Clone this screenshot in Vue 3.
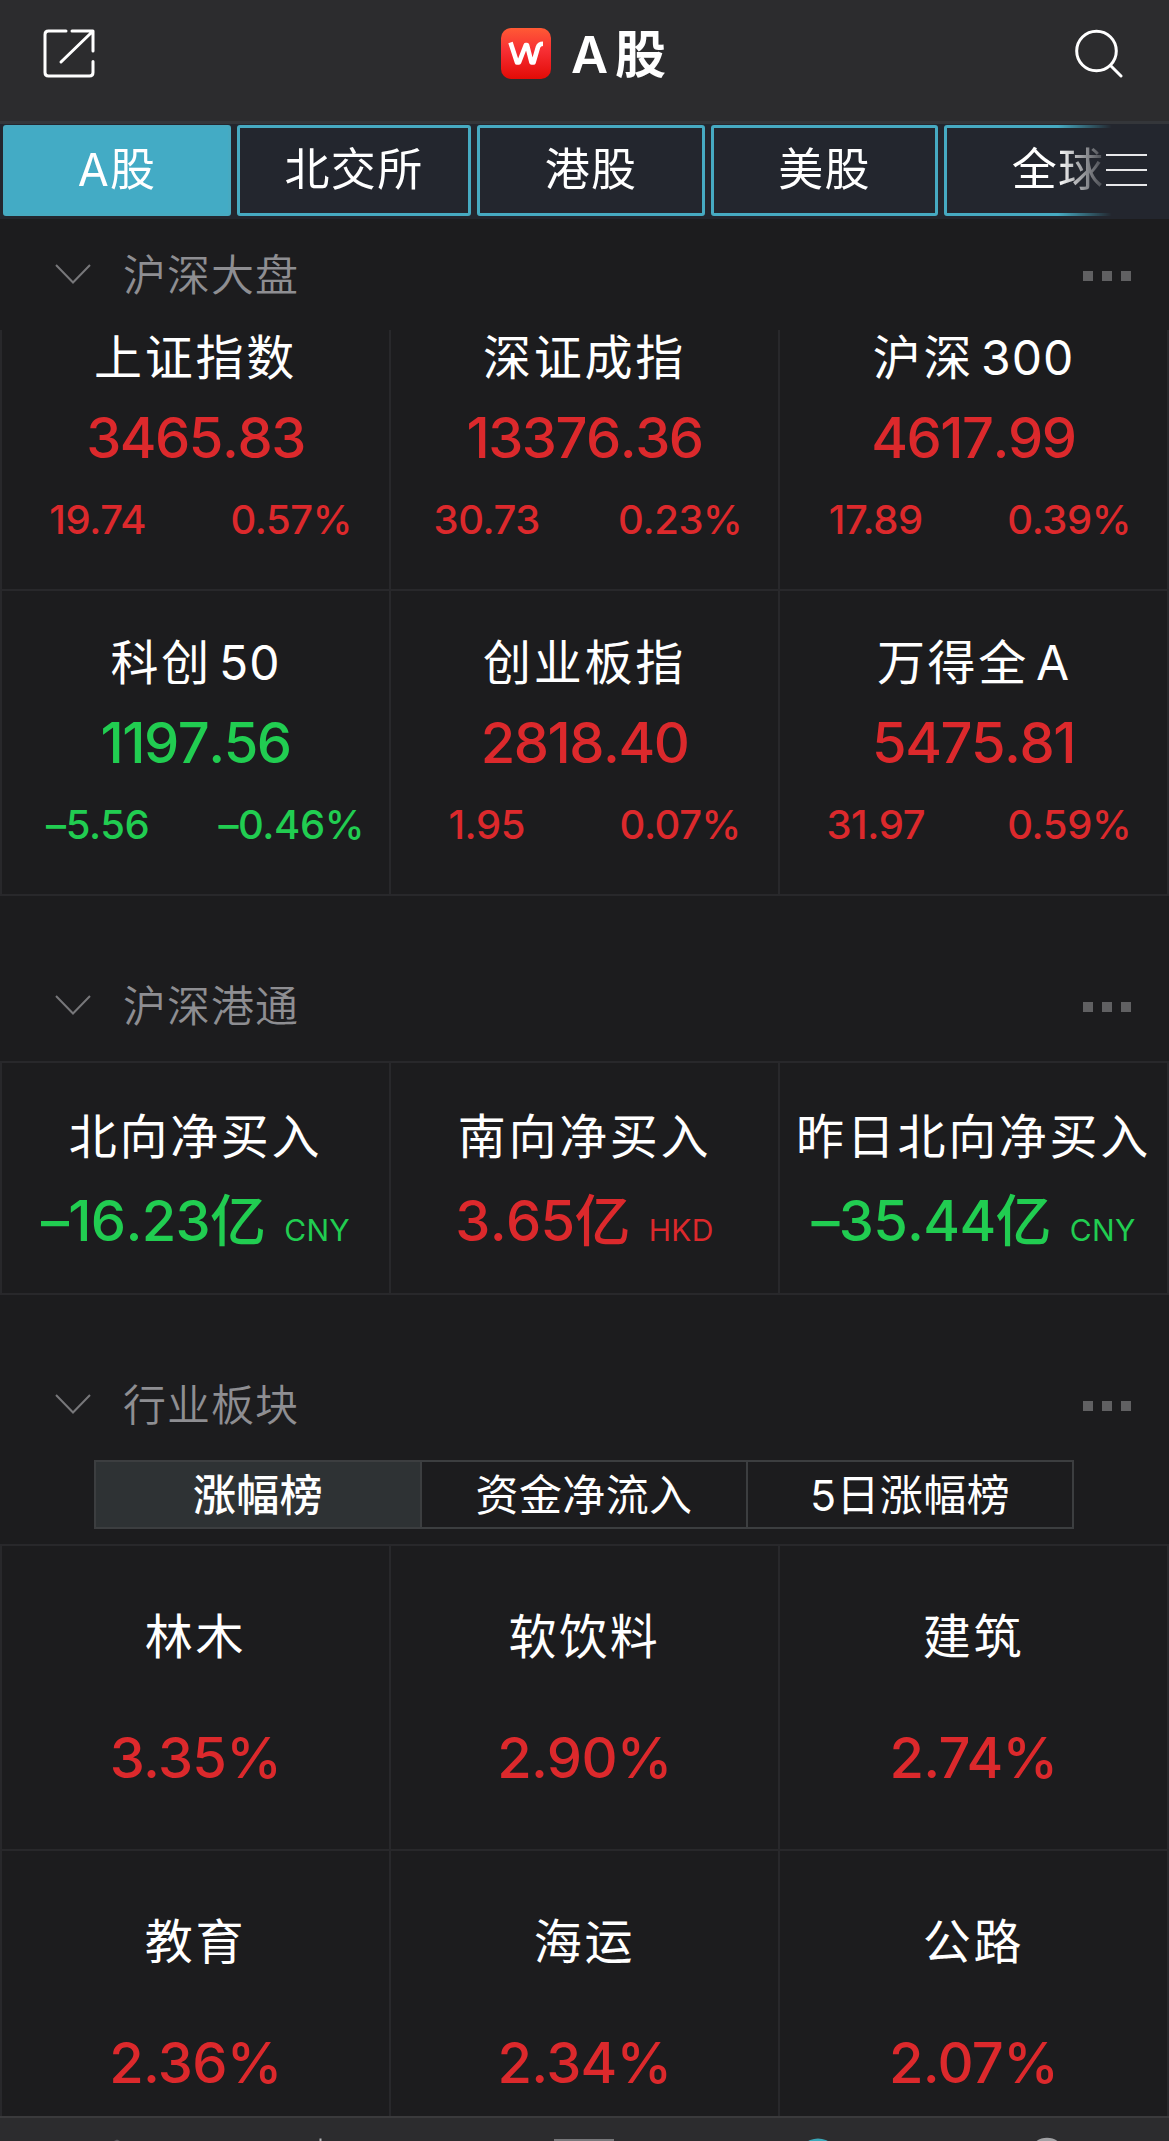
<script setup>
const tabs = [
  { name: 'A股', width: 228, active: true },
  { name: '北交所', width: 234 },
  { name: '港股', width: 228 },
  { name: '美股', width: 227 },
  { name: '全球', width: 228 },
]

const indices = [
  { name: '上证指数', value: '3465.83', change: '19.74', percent: '0.57%', up: true },
  { name: '深证成指', value: '13376.36', change: '30.73', percent: '0.23%', up: true },
  { name: '沪深', suffix: '300', value: '4617.99', change: '17.89', percent: '0.39%', up: true },
  { name: '科创', suffix: '50', value: '1197.56', change: '–5.56', percent: '–0.46%', up: false },
  { name: '创业板指', value: '2818.40', change: '1.95', percent: '0.07%', up: true },
  { name: '万得全', suffix: 'A', value: '5475.81', change: '31.97', percent: '0.59%', up: true },
]

const flows = [
  { name: '北向净买入', amount: '–16.23', currency: 'CNY', up: false },
  { name: '南向净买入', amount: '3.65', currency: 'HKD', up: true },
  { name: '昨日北向净买入', amount: '–35.44', currency: 'CNY', up: false },
]

const rankings = ['涨幅榜', '资金净流入', '5日涨幅榜']

const sectors = [
  { name: '林木', percent: '3.35%' },
  { name: '软饮料', percent: '2.90%' },
  { name: '建筑', percent: '2.74%' },
  { name: '教育', percent: '2.36%' },
  { name: '海运', percent: '2.34%' },
  { name: '公路', percent: '2.07%' },
]
</script>

<template>
  <div class="page">
    <header class="topbar">
      <svg class="share" width="52" height="50" viewBox="0 0 52 50" fill="none" stroke="#fff" stroke-width="3" stroke-linecap="round" stroke-linejoin="round">
        <path d="M23 2H5.500Q2 2 2 5.500V43.500Q2 47 5.500 47H46.500Q50 47 50 43.500V32.500" />
        <path d="M29 2H50V22M49 3L18 33" />
      </svg>
      <div class="brand">
        <svg class="logo" width="50" height="51" viewBox="0 0 50 51">
          <defs>
            <linearGradient id="logoFill" x1="0" y1="0" x2="0" y2="1">
              <stop offset="0" stop-color="#ff5a35" />
              <stop offset=".45" stop-color="#f72e33" />
              <stop offset="1" stop-color="#e20b06" />
            </linearGradient>
          </defs>
          <rect width="50" height="51" rx="10" fill="url(#logoFill)" />
          <path d="M9.500 14.500L16 34.500H18L24.800 17H26L30.500 34.500H32.500L37 19Q38 15.800 42 15.800" fill="none" stroke="#fff" stroke-width="4.600" stroke-linejoin="round" />
        </svg>
        <h1 class="title">A<span>股</span></h1>
      </div>
      <svg class="search" width="48" height="50" viewBox="0 0 48 50" fill="none" stroke="#fff" stroke-width="3" stroke-linecap="round">
        <circle cx="21.500" cy="22" r="19.800" />
        <path d="M35.500 36.500L46 47" />
      </svg>
    </header>

    <nav class="tabs">
      <div class="tab-strip">
        <div v-for="tab in tabs" :key="tab.name" class="tab" :class="{ active: tab.active }" :style="{ width: tab.width + 'px' }">{{ tab.name }}</div>
      </div>
      <div class="menu"><i></i><i></i><i></i></div>
    </nav>

    <section>
      <div class="section-head">
        <svg class="chevron" width="36" height="21" viewBox="0 0 36 21"><path d="M1 1L18 18.500L35 1" /></svg>
        <h2>沪深大盘</h2>
        <div class="dots"><i></i><i></i><i></i></div>
      </div>
      <div class="grid">
        <article v-for="item in indices" :key="item.name" class="cell index" :class="item.up ? 'up' : 'down'">
          <div class="name">{{ item.name }}<span v-if="item.suffix" class="suffix">{{ item.suffix }}</span></div>
          <div class="value">{{ item.value }}</div>
          <div class="detail"><span>{{ item.change }}</span><span>{{ item.percent }}</span></div>
        </article>
      </div>
    </section>

    <section class="spaced">
      <div class="section-head">
        <svg class="chevron" width="36" height="21" viewBox="0 0 36 21"><path d="M1 1L18 18.500L35 1" /></svg>
        <h2>沪深港通</h2>
        <div class="dots"><i></i><i></i><i></i></div>
      </div>
      <div class="grid lined">
        <article v-for="item in flows" :key="item.name" class="cell flow" :class="item.up ? 'up' : 'down'">
          <div class="name">{{ item.name }}</div>
          <div class="value">{{ item.amount }}<span class="unit">亿</span><span class="currency">{{ item.currency }}</span></div>
        </article>
      </div>
    </section>

    <section class="spaced">
      <div class="section-head">
        <svg class="chevron" width="36" height="21" viewBox="0 0 36 21"><path d="M1 1L18 18.500L35 1" /></svg>
        <h2>行业板块</h2>
        <div class="dots"><i></i><i></i><i></i></div>
      </div>
      <div class="segments">
        <div v-for="(name, i) in rankings" :key="name" class="segment" :class="{ active: i === 0 }">{{ name }}</div>
      </div>
      <div class="grid lined">
        <article v-for="item in sectors" :key="item.name" class="cell sector up">
          <div class="name">{{ item.name }}</div>
          <div class="value">{{ item.percent }}</div>
        </article>
      </div>
    </section>

    <footer class="bottombar">
      <svg width="1169" height="23" viewBox="0 0 1169 23" fill="none">
        <path d="M114 23L117 21.500L120 23" fill="#55555a" />
        <path d="M320.500 20.500V23" stroke="#b5b5b8" stroke-width="2" />
        <path d="M554 22H614" stroke="#77777a" stroke-width="2" />
        <circle cx="818" cy="41" r="20.500" fill="#3aa7b8" />
        <circle cx="1047" cy="38" r="16.500" stroke="#a0a0a3" stroke-width="3.500" />
      </svg>
    </footer>
  </div>
</template>

<style>
body {
  margin: 0;
  background: #1c1c1e;
}
</style>

<style scoped>
.page {
  display: flex;
  flex-direction: column;
  width: 1169px;
  height: 2141px;
  overflow: hidden;
  background: #1c1c1e;
  color: #fff;
  font-family: Inter, "Noto Sans CJK SC", sans-serif;
  position: relative;
}
section {
  flex: none;
}
h1, h2 {
  margin: 0;
  font-weight: 400;
}
.topbar {
  flex: none;
  box-sizing: border-box;
  height: 124px;
  padding: 0 46px 16px 43px;
  border-bottom: 3px solid #34363a;
  background: #2c2c2e;
  display: flex;
  align-items: center;
  justify-content: space-between;
}
.share {
  margin-top: 3px;
}
.search {
  margin-top: 3px;
}
.brand {
  display: flex;
  align-items: center;
  gap: 20px;
  margin-right: 3px;
}
.logo {
  margin-top: 2px;
}
.title {
  font-size: 51px;
  line-height: 60px;
  font-weight: 600;
  margin-top: 4px;
}
.title span {
  margin-left: 7px;
  font-weight: 700;
}
.tabs {
  flex: none;
  position: relative;
  height: 95px;
  background: #23262e;
}
.tab-strip {
  display: flex;
  gap: 6px;
  padding: 1px 0 0 3px;
  overflow: hidden;
  -webkit-mask-image: linear-gradient(90deg, #000 1058px, transparent 1112px);
  mask-image: linear-gradient(90deg, #000 1058px, transparent 1112px);
}
.tab {
  flex: none;
  box-sizing: border-box;
  height: 91px;
  border: 3px solid #46aac2;
  border-radius: 3px;
  font-size: 45px;
  font-weight: 370;
  letter-spacing: 1.3px;
  line-height: 83px;
  text-align: center;
}
.tab.active {
  background: #43abc5;
}
.menu {
  position: absolute;
  right: 22px;
  top: 30px;
  display: flex;
  flex-direction: column;
  gap: 13px;
}
.menu i {
  width: 41px;
  height: 2px;
  background: #e8e8ea;
}
.section-head {
  display: flex;
  align-items: center;
  height: 111px;
  padding: 0 38px 0 55px;
}
.spaced {
  padding-top: 54px;
}
.chevron path {
  fill: none;
  stroke: #77777a;
  stroke-width: 2;
}
h2 {
  margin-left: 32px;
  color: #8e8e92;
  font-size: 43px;
  font-weight: 350;
  letter-spacing: 1px;
  line-height: 60px;
}
.dots {
  display: flex;
  gap: 9px;
  margin-left: auto;
  margin-top: 2px;
}
.dots i {
  width: 10px;
  height: 10px;
  background: #606062;
}
.grid {
  display: grid;
  grid-template-columns: 391px 389px 389px;
}
.grid.lined {
  border-top: 2px solid #28282b;
}
.cell {
  box-sizing: border-box;
  height: 305px;
  border-right: 2px solid #28282b;
  border-bottom: 2px solid #28282b;
  text-align: center;
  white-space: nowrap;
}
.cell:nth-child(3n + 1) {
  border-left: 2px solid #28282b;
}
.name {
  font-size: 48px;
  font-weight: 370;
  letter-spacing: 2.700px;
  line-height: 60px;
}
.suffix {
  margin-left: 7px;
  font-weight: 400;
  letter-spacing: 1px;
}
.value {
  font-size: 56px;
  font-weight: 500;
  line-height: 60px;
}
.up .value, .up .detail {
  color: #dc292c;
}
.down .value, .down .detail {
  color: #21cd51;
}
.index {
  padding-top: 42px;
}
.index .value {
  margin-top: 20px;
  font-kerning: none;
  letter-spacing: -1.500px;
}
/* The first row is tucked under the section header. */
.index:nth-child(-n + 3) {
  height: 261px;
  padding-top: 0;
}
.index:nth-child(-n + 3) .name {
  line-height: 56px;
}
.index:nth-child(-n + 3) .value {
  margin-top: 22px;
}
.detail {
  display: grid;
  grid-template-columns: 1fr 1fr;
  margin-top: 27px;
  font-size: 40px;
  font-weight: 450;
  letter-spacing: -0.400px;
  line-height: 50px;
}
.detail span {
  margin-right: 2px;
}
.flow {
  height: 232px;
  padding-top: 44px;
}
.flow .value {
  margin-top: 24px;
  font-kerning: none;
  letter-spacing: -0.700px;
}
.flow .currency {
  margin-left: 19px;
  font-size: 30px;
  font-weight: 400;
  letter-spacing: 0.300px;
}
.segments {
  display: flex;
  box-sizing: border-box;
  width: 980px;
  height: 69px;
  margin: 0 0 15px 94px;
  border: 2px solid #3c3e40;
}
.segment {
  flex: 1;
  font-size: 43px;
  font-weight: 370;
  letter-spacing: 0.400px;
  line-height: 67px;
  text-align: center;
}
.segment + .segment {
  border-left: 2px solid #3c3e40;
}
.segment.active {
  background: #2e3234;
  font-weight: 500;
}
.sector {
  padding-top: 61px;
}
.sector .value {
  margin-top: 61px;
  letter-spacing: -0.700px;
}
.bottombar {
  position: absolute;
  left: 0;
  bottom: 0;
  width: 1169px;
  height: 25px;
  box-sizing: border-box;
  border-top: 2px solid #3a3a3c;
  background: #2c2c2e;
  overflow: hidden;
}
.bottombar svg {
  display: block;
}
</style>
